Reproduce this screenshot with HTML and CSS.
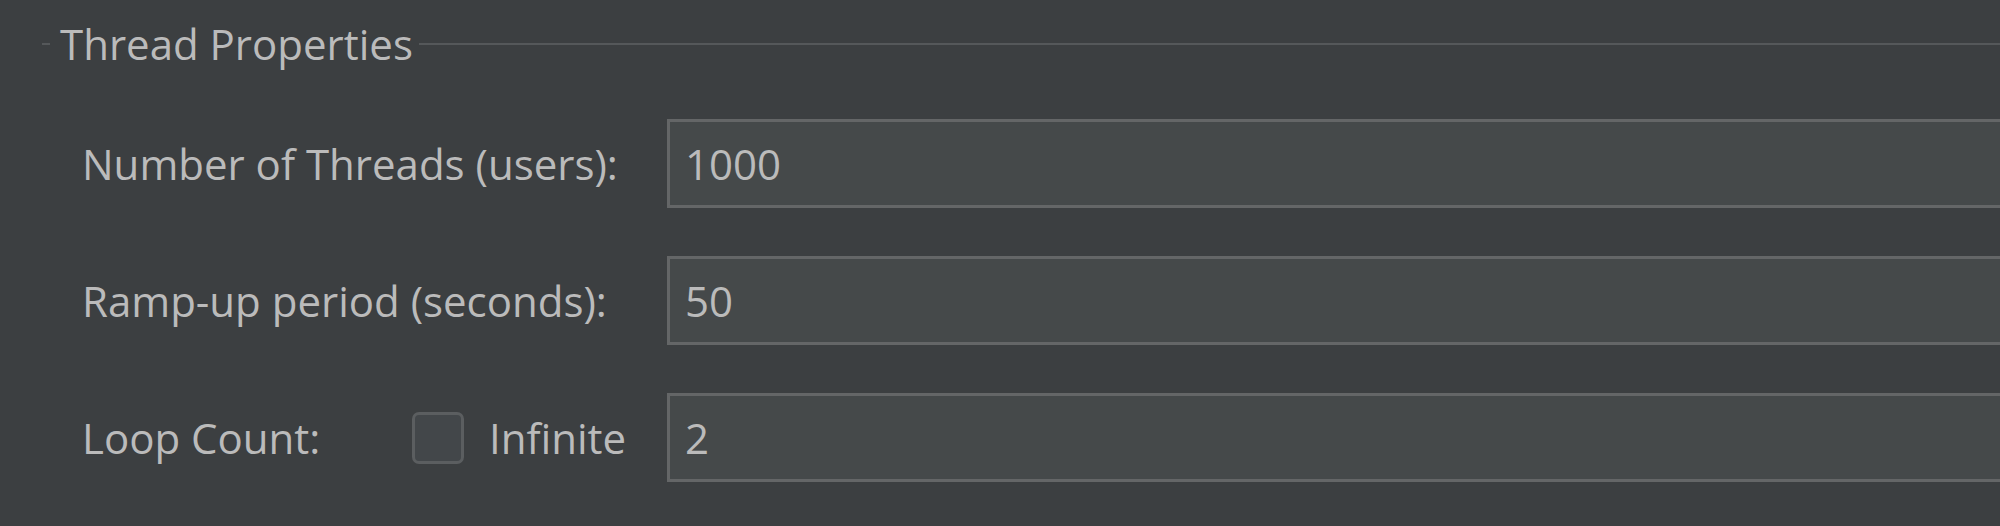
FILE: index.html
```html
<!DOCTYPE html>
<html lang="en">
<head>
  <meta charset="UTF-8">
  <title>Thread Group</title>
  <link rel="stylesheet" href="styles.css">
</head>
<body>
  <div class="panel">
    <div class="group-title">
      <span class="tick"></span>
      <span class="title">Thread Properties</span>
      <span class="rule"></span>
    </div>

    <div class="form">
      <label class="label">Number of Threads (users):</label>
      <div class="field">1000</div>

      <label class="label">Ramp-up period (seconds):</label>
      <div class="field">50</div>

      <div class="label loop">
        <span class="loop-text">Loop Count:</span>
        <span class="checkbox"></span>
        <span>Infinite</span>
      </div>
      <div class="field">2</div>
    </div>
  </div>
</body>
</html>
```

FILE: styles.css
```css
html, body {
  margin: 0;
  padding: 0;
  background-color: #3c3f41;
  overflow: hidden;
}
body {
  font-family: "Open Sans", "Noto Sans", sans-serif;
  font-size: 42px;
  color: #bbbbbb;
  width: 2000px;
  height: 526px;
}
.group-title {
  display: flex;
  align-items: center;
  height: 88px;
}
.tick {
  width: 8px;
  height: 2px;
  margin-left: 42px;
  background-color: #55585a;
}
.title {
  line-height: 1;
  margin-left: 10px;
  white-space: nowrap;
}
.rule {
  flex: 1;
  height: 2px;
  margin-left: 6px;
  background-color: #55585a;
}
.form {
  display: grid;
  grid-template-columns: 585px 1400px;
  row-gap: 48px;
  align-items: center;
  padding-top: 31px;
  padding-left: 82px;
}
.label {
  white-space: nowrap;
}
.loop {
  display: flex;
  align-items: center;
}
.loop-text {
  width: 330px;
}
.checkbox {
  box-sizing: border-box;
  width: 52px;
  height: 52px;
  border: 3px solid #5b5e60;
  border-radius: 7px;
  background-color: #43474a;
  margin-right: 25px;
}
.field {
  box-sizing: border-box;
  height: 89px;
  border: 3px solid #646667;
  background-color: #45494a;
  padding-left: 15px;
  display: flex;
  align-items: center;
}
```
